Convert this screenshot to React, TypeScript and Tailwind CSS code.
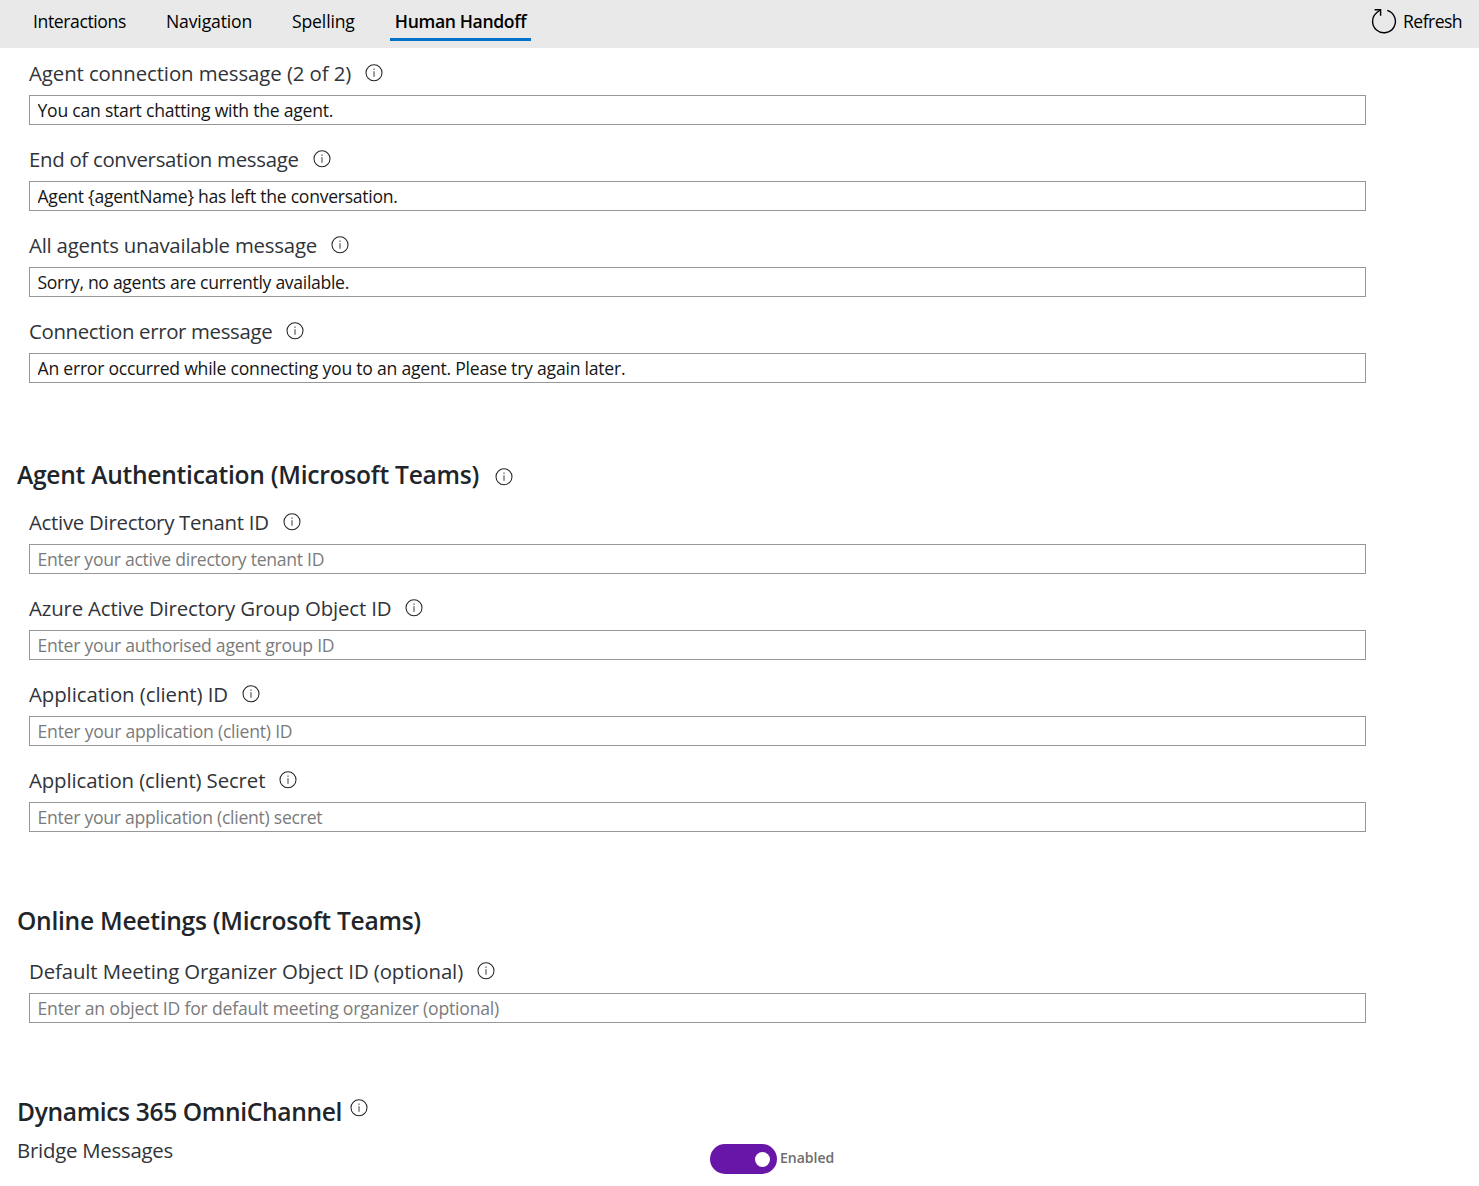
type FieldProps = {
  label: string;
  value?: string;
  placeholder?: string;
  labelSpacing?: string;
  inputSpacing?: string;
};

function InfoIcon({ className = "" }: { className?: string }) {
  return (
    <svg viewBox="0 0 18 18" className={`size-[18px] shrink-0 text-[#212529] ${className}`} fill="none" stroke="currentColor">
      <circle cx="9" cy="8.8" r="8" strokeWidth="1.05" />
      <path d="M9 7.2V12.8" strokeWidth="0.9" />
      <path d="M9 4.5V5.8" strokeWidth="1" />
    </svg>
  );
}

function RefreshIcon() {
  return (
    <svg viewBox="0 0 26 26" className="-mt-0.5 size-[26px] shrink-0" fill="none" stroke="currentColor" strokeWidth="1.4">
      <path d="M16.2 2.4A11.4 11.4 0 1 1 6.2 4.2L9.6 1.7" />
      <path d="M3.6 1.7H9.6V7.7" />
    </svg>
  );
}

function Field({ label, value, placeholder, labelSpacing = "", inputSpacing = "" }: FieldProps) {
  return (
    <label className="flex flex-col gap-1.5">
      <span className="flex h-[30px] items-center gap-3.5">
        <span className={`pb-0.5 text-[20.4px] text-[#303439] ${labelSpacing}`}>{label}</span>
        <InfoIcon className="-mt-[3px]" />
      </span>
      <input
        type="text"
        defaultValue={value}
        placeholder={placeholder}
        className={`h-[30px] w-[1337px] border border-[#979797] bg-white px-[7.5px] text-[17.6px] text-[#161616] outline-none placeholder:text-[#7b7b7b] ${inputSpacing}`}
      />
    </label>
  );
}

const connectionFields: FieldProps[] = [
  { label: "Agent connection message (2 of 2)", value: "You can start chatting with the agent.", labelSpacing: "tracking-[-0.09px]", inputSpacing: "tracking-[-0.24px]" },
  { label: "End of conversation message", value: "Agent {agentName} has left the conversation.", labelSpacing: "tracking-[-0.3px]", inputSpacing: "tracking-[-0.27px]" },
  { label: "All agents unavailable message", value: "Sorry, no agents are currently available.", labelSpacing: "tracking-[-0.22px]", inputSpacing: "tracking-[-0.31px]" },
  { label: "Connection error message", value: "An error occurred while connecting you to an agent. Please try again later.", labelSpacing: "tracking-[-0.34px]", inputSpacing: "tracking-[-0.235px]" },
];

const authFields: FieldProps[] = [
  { label: "Active Directory Tenant ID", placeholder: "Enter your active directory tenant ID", labelSpacing: "tracking-[-0.28px]", inputSpacing: "tracking-[-0.27px]" },
  { label: "Azure Active Directory Group Object ID", placeholder: "Enter your authorised agent group ID", labelSpacing: "tracking-[-0.16px]", inputSpacing: "tracking-[-0.25px]" },
  { label: "Application (client) ID", placeholder: "Enter your application (client) ID", labelSpacing: "tracking-[-0.08px]", inputSpacing: "tracking-[-0.22px]" },
  { label: "Application (client) Secret", placeholder: "Enter your application (client) secret", labelSpacing: "tracking-[-0.13px]", inputSpacing: "tracking-[-0.26px]" },
];

export default function App() {
  return (
    <div className="min-h-[1186px] bg-white font-['Open_Sans',sans-serif]">
      <header className="flex h-12 items-start justify-between bg-[#e9e9e9] pr-[17px] pl-[33px] text-[17.6px] text-black">
        <nav className="flex">
          <a className="flex h-[41px] w-[133px] items-center pt-0.5 tracking-[-0.4px]">Interactions</a>
          <a className="flex h-[41px] w-[126px] items-center pt-0.5 tracking-[-0.15px]">Navigation</a>
          <a className="flex h-[41px] w-[98px] items-center pt-0.5 tracking-[-0.15px]">Spelling</a>
          <a className="flex h-[41px] w-[141px] items-center justify-center border-b-3 border-[#0072c9] pt-[5px] font-semibold tracking-[-0.37px]">Human Handoff</a>
        </nav>
        <button className="flex h-[41px] items-center gap-1.5 pt-0.5 tracking-[-0.57px]">
          <RefreshIcon />
          Refresh
        </button>
      </header>

      <main className="text-[#212529]">
        <section className="flex flex-col gap-5 pt-[11px] pl-[29px]">
          {connectionFields.map((f) => <Field key={f.label} {...f} />)}
        </section>

        <section className="mt-[74px] pl-[17px]">
          <h2 className="flex h-9 items-center gap-4 text-[24.6px] font-semibold tracking-[-0.27px]">
            Agent Authentication (Microsoft Teams)
            <InfoIcon className="mt-1" />
          </h2>
          <div className="mt-[15px] flex flex-col gap-5 pl-3">
            {authFields.map((f) => <Field key={f.label} {...f} />)}
          </div>
        </section>

        <section className="mt-[71px] pl-[17px]">
          <h2 className="flex h-9 items-center text-[24.6px] font-semibold tracking-[-0.27px]">Online Meetings (Microsoft Teams)</h2>
          <div className="mt-[18px] pl-3">
            <Field
              label="Default Meeting Organizer Object ID (optional)"
              placeholder="Enter an object ID for default meeting organizer (optional)"
              labelSpacing="tracking-[-0.12px]"
              inputSpacing="tracking-[-0.2px]"
            />
          </div>
        </section>

        <section className="mt-[71px] pl-[17px]">
          <h2 className="flex h-9 items-center gap-2 text-[24.6px] font-semibold tracking-[-0.36px]">
            Dynamics 365 OmniChannel
            <InfoIcon className="-mt-2" />
          </h2>
          <div className="mt-1.5 flex">
            <span className="h-[30px] w-[693px] text-[20.4px] leading-7 tracking-[-0.25px] text-[#303439]">Bridge Messages</span>
            <div className="mt-2 flex h-[30px] gap-[3px]">
              <button role="switch" aria-checked="true" aria-label="Bridge Messages" className="flex h-[30px] w-[67px] items-center justify-end rounded-full bg-[#6716a8] pr-[7px]">
                <span className="size-[15px] rounded-full bg-white" />
              </button>
              <span className="text-sm leading-7 font-semibold text-[#6c6c6c]">Enabled</span>
            </div>
          </div>
        </section>
      </main>
    </div>
  );
}
